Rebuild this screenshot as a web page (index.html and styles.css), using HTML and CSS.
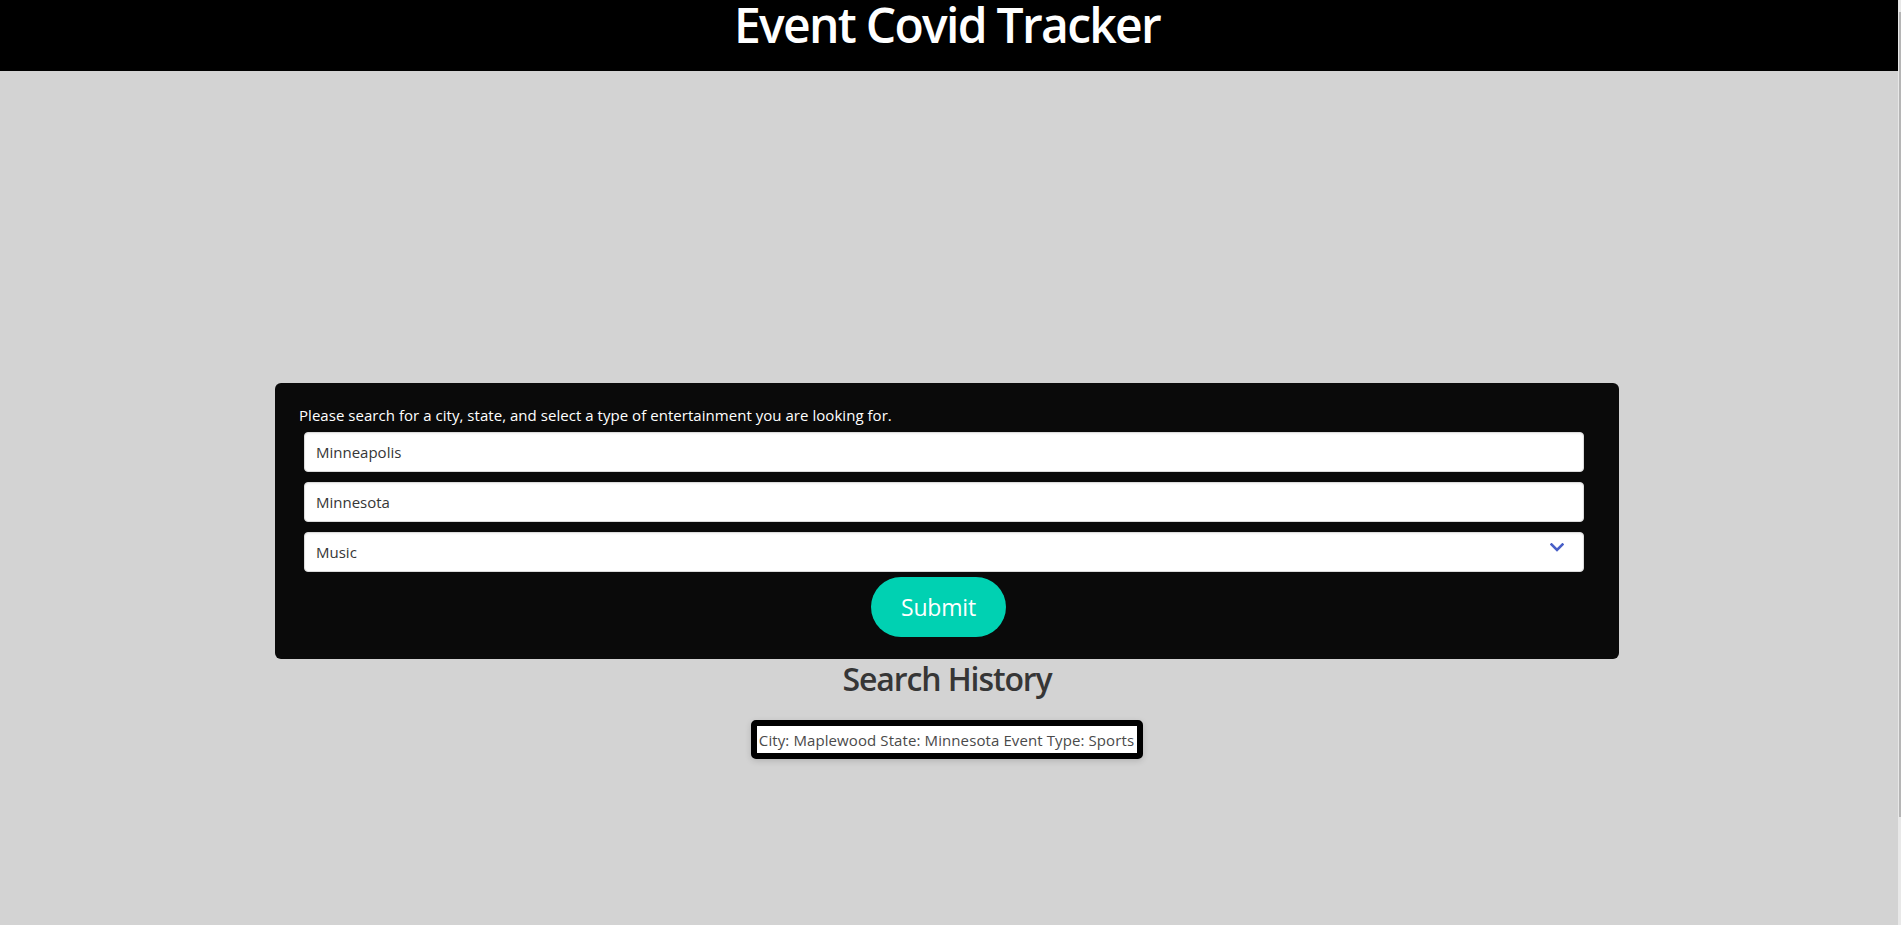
FILE: index.html
```html
<!DOCTYPE html>
<html lang="en">
<head>
<meta charset="utf-8">
<title>Event Covid Tracker</title>
<link rel="stylesheet" href="styles.css">
</head>
<body>
<div class="page">
  <div class="content">
    <header class="site-header">
      <h1 class="title">Event Covid Tracker</h1>
    </header>
    <main class="main">
      <section class="search-box">
        <p class="search-label">Please search for a city, state, and select a type of entertainment you are looking for.</p>
        <div class="fields">
          <input class="input" type="text" value="Minneapolis">
          <input class="input" type="text" value="Minnesota">
          <div class="select-wrap">
            <div class="select">Music</div>
            <svg class="select-arrow" width="14" height="9" viewBox="0 0 14 9"><path d="M1.5 1.5 L7 7 L12.5 1.5" fill="none" stroke="#485fc7" stroke-width="2.6" stroke-linecap="square"/></svg>
          </div>
          <div class="submit-row">
            <button class="submit" type="button">Submit</button>
          </div>
        </div>
      </section>
      <h2 class="history-title">Search History</h2>
      <div class="history-item">City: Maplewood State: Minnesota Event Type: Sports</div>
    </main>
  </div>
  <div class="scroll-strip"><div class="scroll-thumb"></div></div>
</div>
</body>
</html>
```
FILE: styles.css
```css
html, body {
  margin: 0;
  padding: 0;
  height: 100%;
  overflow: hidden;
}
body {
  background: #d3d3d3;
  font-family: "Open Sans", "Noto Sans", sans-serif;
  font-size: 16px;
}
.page {
  display: flex;
  height: 100%;
}
.content {
  flex: 1;
  min-width: 0;
}
.scroll-strip {
  width: 3px;
  background: #e8e8e8;
  display: flex;
  justify-content: flex-end;
  padding-top: 12px;
}
.scroll-thumb {
  width: 2px;
  height: 805px;
  background: #b5b5b5;
}
.site-header {
  background: #000;
  height: 71px;
  padding-right: 4px;
  box-sizing: border-box;
  text-align: center;
}
.title {
  margin: 0;
  color: #fff;
  font-size: 48px;
  font-weight: 600;
  line-height: 50px;
  letter-spacing: -1.7px;
}
.main {
  padding-right: 4px;
  display: flex;
  flex-direction: column;
  align-items: center;
}
.search-box {
  margin-top: 312px;
  width: 1344px;
  box-sizing: border-box;
  background: #0a0a0a;
  border-radius: 6px;
  padding: 20px 35px 22px 24px;
}
.search-label {
  margin: 0;
  color: #fff;
  font-size: 15px;
  line-height: 24px;
  letter-spacing: 0.04px;
}
.fields {
  margin: 5px 0 0 5px;
  display: flex;
  flex-direction: column;
  gap: 10px;
}
.input, .select {
  display: block;
  box-sizing: border-box;
  width: 100%;
  height: 40px;
  margin: 0;
  padding: 0 11px;
  border: 1px solid #dbdbdb;
  border-radius: 4px;
  background: #fff;
  color: #363636;
  font-family: inherit;
  font-size: 15px;
  letter-spacing: 0;
  line-height: 38px;
  box-shadow: inset 0 1px 2px rgba(10,10,10,.05);
  outline: none;
}
.select-wrap {
  position: relative;
}
.select-arrow {
  position: absolute;
  right: 20px;
  top: 11px;
}
.submit-row {
  display: flex;
  justify-content: center;
  padding-right: 11px;
  margin-top: -5px;
}
.submit {
  height: 60px;
  padding: 0 30px;
  border: none;
  border-radius: 30px;
  background: #00d1b2;
  color: #fff;
  font-family: inherit;
  font-size: 23px;
  letter-spacing: -0.2px;
  cursor: pointer;
}
.history-title {
  margin: 2px 0 0;
  color: #363636;
  font-size: 32px;
  font-weight: 600;
  line-height: 36px;
  letter-spacing: -1.1px;
}
.history-item {
  margin-top: 23px;
  border: 6px solid #000;
  border-radius: 5px;
  background: #fff;
  padding: 2px 3px 1px 2px;
  color: #4a4a4a;
  font-size: 15px;
  line-height: 24px;
  letter-spacing: 0.1px;
  box-shadow: 0 2px 6px rgba(10,10,10,.15);
}
```
